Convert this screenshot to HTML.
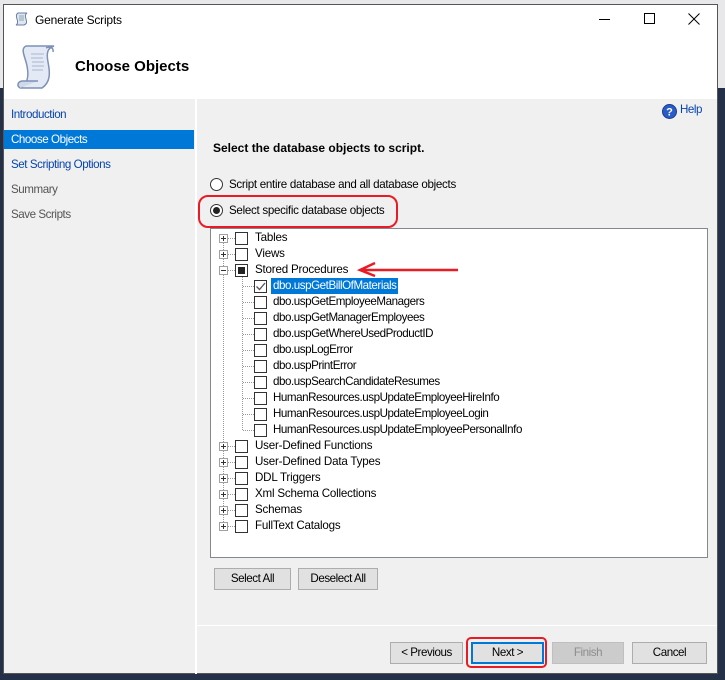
<!DOCTYPE html>
<html><head><meta charset="utf-8"><style>
*{margin:0;padding:0;box-sizing:border-box}
body{width:725px;height:680px;background:#243047;position:relative;overflow:hidden;font-family:"Liberation Sans",sans-serif;font-size:11.6px;color:#000;letter-spacing:-0.45px}
.a{position:absolute}
.win{left:3px;top:4px;width:715px;height:670px;background:#f0f0f0;border:1px solid #555}
.t{white-space:nowrap}
.btn{position:absolute;height:22px;background:#e1e1e1;border:1px solid #adadad;text-align:center;line-height:20px}
.exp{position:absolute;width:9px;height:9px;border:1px solid #a0a0a0;background:#fff;left:219px}
.exp:before{content:"";position:absolute;left:1px;top:3px;width:5px;height:1px;background:#333}
.exp.p:after{content:"";position:absolute;left:3px;top:1px;width:1px;height:5px;background:#333}
.cb{position:absolute;width:13px;height:13px;border:1px solid #333;background:#fff}
.dh{position:absolute;height:1px;border-top:1px dotted #999}
.dv{position:absolute;width:1px;border-left:1px dotted #999}
</style></head><body>
<div style="position:absolute;left:0;top:0;width:725px;height:88px;background:#e8e8ea"></div>
<div class="a win"></div>
<div class="a" style="left:4px;top:5px;width:713px;height:94px;background:#fff"></div>
<svg class="a" style="left:14px;top:11px" width="16" height="16" viewBox="0 0 16 16"><path d="M4 2h9c-2 1-2 3-1 6s1 5-2 6H2c2-1 2-3 1-6S2 3 4 2z" fill="#dfe6f2" stroke="#6a7ea8"/><path d="M5 5h5M5 7h5M5 9h5" stroke="#8aa"/></svg>
<div class="a t" style="left:35px;top:13px;font-size:12px;letter-spacing:-0.2px">Generate Scripts</div>
<div class="a" style="left:599px;top:19px;width:11px;height:1px;background:#000"></div>
<div class="a" style="left:644px;top:13px;width:11px;height:11px;border:1px solid #000"></div>
<svg class="a" style="left:688px;top:13px" width="12" height="12"><path d="M0.5 0.5L11.5 11.5M11.5 0.5L0.5 11.5" stroke="#000"/></svg>
<svg class="a" style="left:14px;top:42px" width="48" height="50" viewBox="0 0 48 50"><path d="M12 4h28c-6 2-8 6-6 16s3 20-6 26H6c8-4 9-12 7-22S6 7 12 4z" fill="#e4eaf5" stroke="#7d90b5" stroke-width="1.5"/><path d="M32 6c4-2 8 0 7 4" fill="none" stroke="#7d90b5" stroke-width="1.5"/><path d="M6 46c-3-2-3-6 2-7h16" fill="#d0d9ea" stroke="#7d90b5" stroke-width="1.5"/><path d="M17 12h13M17 16h12M18 20h12M18 24h12M18 28h11" stroke="#a9b6cf"/></svg>
<div class="a t" style="left:75px;top:58px;font-size:15px;font-weight:bold;letter-spacing:0">Choose Objects</div>
<div class="a" style="left:195px;top:99px;width:2px;height:575px;background:#fff"></div>
<div class="a t" style="left:11px;top:108px;color:#0645ad">Introduction</div>
<div class="a" style="left:4px;top:130px;width:190px;height:19px;background:#0078d7"></div>
<div class="a t" style="left:11px;top:133px;color:#fff">Choose Objects</div>
<div class="a t" style="left:11px;top:158px;color:#0645ad">Set Scripting Options</div>
<div class="a t" style="left:11px;top:183px;color:#555">Summary</div>
<div class="a t" style="left:11px;top:208px;color:#555">Save Scripts</div>
<svg class="a" style="left:662px;top:104px" width="15" height="15"><circle cx="7.5" cy="7.5" r="7" fill="#2a5cc8" stroke="#1a3c8a"/><text x="7.5" y="11.5" font-size="11" font-weight="bold" fill="#fff" text-anchor="middle" font-family="Liberation Sans" letter-spacing="0">?</text></svg>
<div class="a t" style="left:680px;top:103px;color:#0645ad">Help</div>
<div class="a t" style="left:213px;top:141px;font-weight:bold;letter-spacing:0;font-size:12px">Select the database objects to script.</div>
<div class="a" style="left:210px;top:178px;width:13px;height:13px;border:1px solid #333;border-radius:50%;background:#fff"></div>
<div class="a t" style="left:229px;top:178px;letter-spacing:-0.3px">Script entire database and all database objects</div>
<div class="a" style="left:210px;top:204px;width:13px;height:13px;border:1px solid #333;border-radius:50%;background:#fff"></div>
<div class="a" style="left:213px;top:207px;width:7px;height:7px;border-radius:50%;background:#222"></div>
<div class="a t" style="left:229px;top:204px;letter-spacing:-0.3px">Select specific database objects</div>
<div class="a" style="left:198px;top:195px;width:200px;height:33px;border:2px solid #e81c24;border-radius:10px"></div>
<div class="a" style="left:210px;top:228px;width:498px;height:330px;background:#fff;border:1px solid #828790"></div>
<div class="dv" style="left:223px;top:234px;height:292px"></div>
<div class="dv" style="left:242px;top:276px;height:154px"></div>
<div id="tree"></div>
<svg class="a" style="left:355px;top:260px" width="106" height="20"><path d="M103 10H5M20 3L5 10L20 16" fill="none" stroke="#e81c24" stroke-width="2.5"/></svg>
<div class="btn" style="left:214px;top:568px;width:77px">Select All</div>
<div class="btn" style="left:298px;top:568px;width:80px">Deselect All</div>
<div class="a" style="left:197px;top:625px;width:520px;height:1px;background:#fff"></div>
<div class="btn" style="left:390px;top:642px;width:73px">&lt; Previous</div>
<div class="btn" style="left:471px;top:642px;width:73px;border:2px solid #0078d7;line-height:18px">Next &gt;</div>
<div class="a" style="left:466px;top:637px;width:81px;height:31px;border:2px solid #e81c24;border-radius:5px"></div>
<div class="btn" style="left:552px;top:642px;width:72px;background:#ccc;border-color:#bfbfbf;color:#8d8d8d">Finish</div>
<div class="btn" style="left:632px;top:642px;width:75px">Cancel</div>
<script>
var rows=[[0,"Tables","p"],[0,"Views","p"],[0,"Stored Procedures","m"],
[1,"dbo.uspGetBillOfMaterials"],[1,"dbo.uspGetEmployeeManagers"],[1,"dbo.uspGetManagerEmployees"],[1,"dbo.uspGetWhereUsedProductID"],[1,"dbo.uspLogError"],[1,"dbo.uspPrintError"],[1,"dbo.uspSearchCandidateResumes"],[1,"HumanResources.uspUpdateEmployeeHireInfo"],[1,"HumanResources.uspUpdateEmployeeLogin"],[1,"HumanResources.uspUpdateEmployeePersonalInfo"],
[0,"User-Defined Functions","p"],[0,"User-Defined Data Types","p"],[0,"DDL Triggers","p"],[0,"Xml Schema Collections","p"],[0,"Schemas","p"],[0,"FullText Catalogs","p"]];
var h="";rows.forEach(function(r,i){var y=230+16*i,c=y+8;
if(r[0]==0){h+='<div class="dh" style="left:228px;top:'+c+'px;width:7px"></div><div class="exp '+(r[2]=="p"?"p":"")+'" style="top:'+(c-4)+'px"></div><div class="cb" style="left:235px;top:'+(c-6)+'px">'+(r[2]=="m"?'<div style="position:absolute;left:2px;top:2px;width:7px;height:7px;background:#222"></div>':'')+'</div><div class="a t" style="left:255px;top:'+(y+1)+'px;letter-spacing:-0.2px">'+r[1]+'</div>';}
else{h+='<div class="dh" style="left:243px;top:'+c+'px;width:11px"></div><div class="cb" style="left:254px;top:'+(c-6)+'px">'+(i==3?'<svg width="11" height="11" style="position:absolute;left:0;top:0"><path d="M1.5 5.5L4.5 8.5L10 2" fill="none" stroke="#555" stroke-width="1.3"/></svg>':'')+'</div><div class="a t" style="left:271px;top:'+y+'px;height:16px;padding:1px 2px 0 2px;'+(i==3?'color:#fff;background:#0078d7':'')+'">'+r[1]+'</div>';}
});document.getElementById("tree").innerHTML=h;
</script>
</body></html>
